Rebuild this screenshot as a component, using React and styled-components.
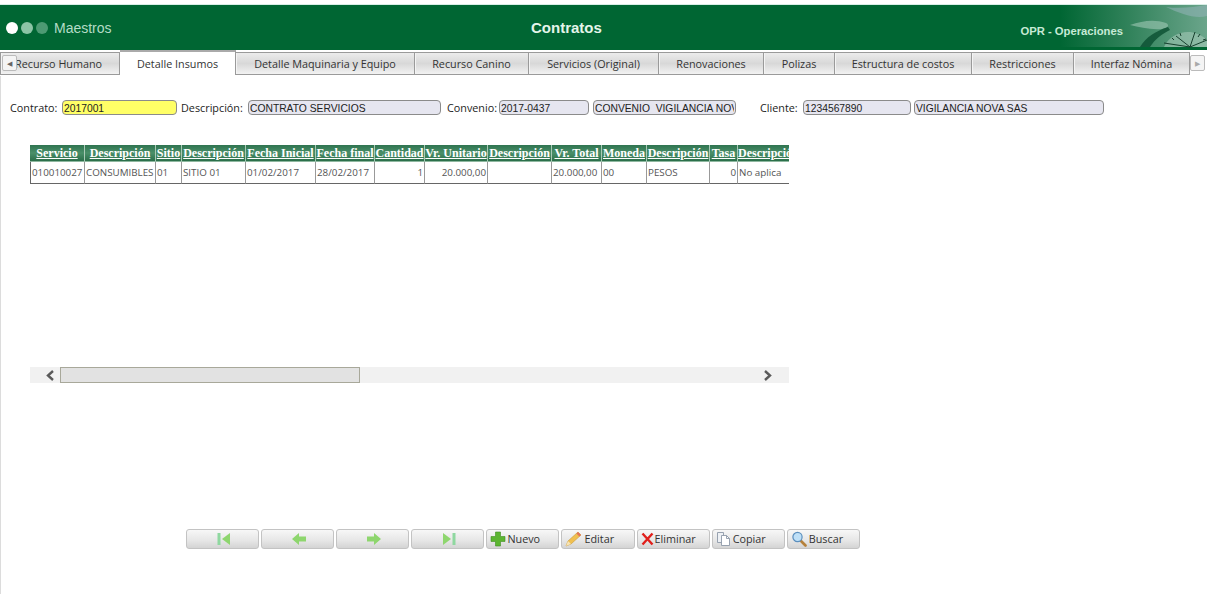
import React from 'react';
import styled, { createGlobalStyle } from 'styled-components';

const GlobalStyle = createGlobalStyle`
  html, body {
    margin: 0;
    padding: 0;
    background: #fff;
    overflow: hidden;
  }
`;

const Page = styled.div`
  width: 1207px;
  height: 594px;
  padding-top: 5px;
  box-sizing: border-box;
  display: flex;
  flex-direction: column;
  font-family: "Open Sans", "Liberation Sans", sans-serif;
`;

const Header = styled.header`
  position: relative;
  height: 45px;
  flex: none;
  background: #006633;
  box-shadow: 0 -1px 0 #d8eee6;
  display: grid;
  grid-template-columns: 531px auto 1fr;
  align-items: center;
`;

const HeaderLeft = styled.div`
  display: flex;
  align-items: center;
  padding-left: 6px;
  gap: 3px;
  font: 14px "Liberation Sans", Arial, sans-serif;
  color: #b3dcc6;
`;

const Dot = styled.span`
  width: 12px;
  height: 12px;
  border-radius: 50%;
  background: ${(p) => p.$color};
`;

const HeaderLabel = styled.span`
  margin-left: 3px;
`;

const HeaderTitle = styled.div`
  font: bold 15px "Liberation Sans", Arial, sans-serif;
  color: #e4f5ea;
`;

const HeaderRight = styled.div`
  position: relative;
  z-index: 1;
  text-align: right;
  padding-right: 84px;
  padding-top: 7px;
  font: bold 11.25px "Liberation Sans", Arial, sans-serif;
  color: #c6ead5;
`;

const HeaderArt = styled.svg`
  position: absolute;
  right: 0;
  top: 0;
`;

const TabStrip = styled.nav`
  display: flex;
  height: 25px;
  flex: none;
  margin-top: 1px;
  position: relative;
`;

const Tab = styled.div`
  box-sizing: border-box;
  width: ${(p) => p.$width}px;
  flex: none;
  height: ${(p) => (p.$active ? 25 : 23)}px;
  margin-top: ${(p) => (p.$active ? -1 : 1)}px;
  display: flex;
  align-items: center;
  justify-content: center;
  font-size: 10.8px;
  color: #333;
  overflow: hidden;
  white-space: nowrap;
  border-right: 1px solid #9a9a9a;
  border-bottom: ${(p) => (p.$active ? 'none' : '1px solid #9a9a9a')};
  border-top: ${(p) => (p.$active ? '2px solid #aaa' : '1px solid #9a9a9a')};
  background: ${(p) => (p.$active ? '#fff' : 'linear-gradient(#ececec, #d8d8d8 50%, #f2f2f2)')};
  box-shadow: ${(p) => (p.$active ? 'none' : 'inset 1px 0 0 #f4f4f4')};
`;

const FirstTab = styled(Tab)`
  justify-content: flex-start;
  padding-left: 14px;
  border-left: 1px solid #9a9a9a;
`;

const ScrollArrow = styled.div`
  box-sizing: border-box;
  width: 15px;
  height: 16px;
  position: absolute;
  top: 4px;
  left: ${(p) => p.$left}px;
  background: #f4f4f4;
  border: 1px solid #bbb;
  border-radius: 2px;
  display: flex;
  align-items: center;
  justify-content: center;
  color: ${(p) => p.$color};
  font-size: 7px;
  line-height: 1;
`;

const Content = styled.main`
  flex: 1;
  display: flex;
  flex-direction: column;
  box-shadow: inset 1px 0 0 #dcdcdc;
`;

const FormRow = styled.div`
  display: flex;
  align-items: center;
  height: 16px;
  margin-top: 23px;
  padding-left: 10px;
  flex: none;
`;

const Label = styled.label`
  font-size: 10.8px;
  color: #222;
  width: ${(p) => p.$width}px;
  margin-left: ${(p) => p.$gap || 0}px;
  flex: none;
  white-space: nowrap;
`;

const Field = styled.input`
  box-sizing: border-box;
  flex: none;
  width: ${(p) => p.$width}px;
  margin: 0 0 0 ${(p) => p.$gap || 0}px;
  height: 15px;
  padding: 2px 1px 0;
  border: 1px solid #8b8b8b;
  border-radius: 4px;
  background: ${(p) => (p.$key ? '#ffff66' : '#e6e6f0')};
  font: 10.3px "Liberation Sans", Arial, sans-serif;
  color: #222;
  outline: none;
`;

const GridWrap = styled.div`
  width: 759px;
  margin: 30px 0 0 30px;
  flex: none;
`;

const GridClip = styled.div`
  height: 222px;
  overflow: hidden;
`;

const Table = styled.table`
  border-collapse: separate;
  border-spacing: 0;
  table-layout: fixed;
  width: 760px;
`;

const Th = styled.th`
  height: 17px;
  padding: 0;
  box-sizing: border-box;
  background: linear-gradient(#2f7450, #4a8f69 50%, #2a6e49);
  border-right: 1px solid #a9c9b6;
  border-bottom: 1px solid #8fb8a0;
  color: #fff;
  font: bold 12px "Liberation Serif", "Times New Roman", serif;
  text-decoration: underline;
  text-align: center;
  white-space: nowrap;
  overflow: hidden;
`;

const Td = styled.td`
  height: 22px;
  padding: 0 1px;
  box-sizing: border-box;
  border-right: 1px solid #999;
  border-bottom: 1px solid #666;
  border-left: ${(p) => (p.$first ? '1px solid #666' : 'none')};
  color: #555;
  font-size: 9.8px;
  text-align: ${(p) => (p.$num ? 'right' : 'left')};
  white-space: nowrap;
  overflow: hidden;
`;

const ScrollBar = styled.div`
  height: 16px;
  background: #f1f1f1;
  display: flex;
  align-items: center;
`;

const ScrollBtnLeft = styled.div`
  width: 30px;
  flex: none;
  display: flex;
  justify-content: center;
  align-items: center;
  padding-left: 10px;
  box-sizing: border-box;
`;

const ScrollBtnRight = styled(ScrollBtnLeft)`
  padding-left: 0;
  padding-right: 12px;
`;

const ScrollThumb = styled.div`
  box-sizing: border-box;
  width: 300px;
  height: 16px;
  flex: none;
  background: #e2e2e2;
  border: 1px solid #a8a89a;
`;

const ScrollSpacer = styled.div`
  flex: 1;
`;

const Toolbar = styled.div`
  display: flex;
  gap: 2px;
  margin: 146px 0 0 186px;
  flex: none;
`;

const ToolButton = styled.button`
  box-sizing: border-box;
  width: 73.1px;
  height: 20px;
  padding: 0 0 1px 3px;
  display: flex;
  align-items: center;
  justify-content: ${(p) => (p.$nav ? 'center' : 'flex-start')};
  gap: 1px;
  background: linear-gradient(#f7f7f7, #e6e6e6 60%, #d4d4d4);
  border: 1px solid #c3c3c3;
  border-radius: 3px;
  font: 10.8px "Open Sans", "Liberation Sans", sans-serif;
  color: #333;
`;

const tabs = [
  ['Detalle Insumos', 116, true],
  ['Detalle Maquinaria y Equipo', 179],
  ['Recurso Canino', 114],
  ['Servicios (Original)', 130],
  ['Renovaciones', 105],
  ['Polizas', 71],
  ['Estructura de costos', 137],
  ['Restricciones', 102],
  ['Interfaz Nómina', 116],
];

const columns = [
  ['Servicio', 55, '010010027'],
  ['Descripción', 71, 'CONSUMIBLES'],
  ['Sitio', 26, '01'],
  ['Descripción', 64, 'SITIO 01'],
  ['Fecha Inicial', 70, '01/02/2017'],
  ['Fecha final', 59, '28/02/2017'],
  ['Cantidad', 50, '1', true],
  ['Vr. Unitario', 63, '20.000,00', true],
  ['Descripción', 64, ''],
  ['Vr. Total', 50, '20.000,00'],
  ['Moneda', 45, '00'],
  ['Descripción', 63, 'PESOS'],
  ['Tasa', 28, '0', true],
  ['Descripción', 52, 'No aplica'],
];

const NavIcon = ({ dir }) => (
  <svg width="16" height="14" viewBox="0 0 16 14" fill="#8ed66e">
    {dir === 'first' && (
      <>
        <rect x="1.5" y="1" width="3" height="12" fill="#8fd8a0" />
        <path d="M14 1v12L6 7z" />
      </>
    )}
    {dir === 'prev' && <path d="M1 7l7-6v3.5h7v5H8V13z" />}
    {dir === 'next' && <path d="M15 7L8 1v3.5H1v5h7V13z" />}
    {dir === 'last' && (
      <>
        <rect x="11.5" y="1" width="3" height="12" fill="#8fd8a0" />
        <path d="M2 1v12l8-6z" />
      </>
    )}
  </svg>
);

const PlusIcon = () => (
  <svg width="16" height="16" viewBox="0 0 16 16">
    <path d="M5.5 1h5v4.5H15v5h-4.5V15h-5v-4.5H1v-5h4.5z" fill="#5cb531" stroke="#3f8f22" strokeWidth=".6" />
  </svg>
);

const PencilIcon = () => (
  <svg width="18" height="16" viewBox="0 0 18 16">
    <path d="M1 15l2-5L13 1l3 3-10 9z" fill="#f0c050" stroke="#c79a3a" strokeWidth=".6" />
    <path d="M13 1l3 3-1.6 1.6-3-3z" fill="#e2735a" />
    <path d="M1 15l2-5 3 3z" fill="#f7e3b5" />
  </svg>
);

const CrossIcon = () => (
  <svg width="13" height="14" viewBox="0 0 13 14">
    <path d="M1.5 1.5l10 11M11.5 1.5l-10 11" stroke="#e0201c" strokeWidth="2.4" />
  </svg>
);

const CopyIcon = () => (
  <svg width="16" height="16" viewBox="0 0 16 16" fill="#fff" stroke="#8d98a8" strokeWidth=".9">
    <path d="M1.5 1.5h6v10h-6z" fill="#eef1f5" />
    <path d="M5.5 4.5h5l3 3v7h-8z" />
    <path d="M10.5 4.5v3h3" fill="none" />
  </svg>
);

const SearchIcon = () => (
  <svg width="17" height="16" viewBox="0 0 17 16">
    <path d="M9.5 9.5l5 5" stroke="#b5803a" strokeWidth="2.6" strokeLinecap="round" />
    <circle cx="6.5" cy="6" r="4.6" fill="#bfe0f7" stroke="#5b8fbe" strokeWidth="1.2" />
  </svg>
);

const Chevron = ({ left }) => (
  <svg width="10" height="11" viewBox="0 0 10 11">
    <path d={left ? 'M8 1L3 5.5 8 10' : 'M2 1l5 4.5L2 10'} fill="none" stroke="#5a5a5a" strokeWidth="2.4" />
  </svg>
);

const App = () => (
  <Page>
    <GlobalStyle />
    <Header>
      <HeaderLeft>
        <Dot $color="#ffffff" />
        <Dot $color="#8cc4a6" />
        <Dot $color="#4d9a73" />
        <HeaderLabel>Maestros</HeaderLabel>
      </HeaderLeft>
      <HeaderTitle>Contratos</HeaderTitle>
      <HeaderRight>OPR - Operaciones</HeaderRight>
      <HeaderArt width="147" height="45" viewBox="0 0 147 45">
        <defs>
          <linearGradient id="fade" x1="0" x2="1" y1="0" y2="0">
            <stop offset="0" stopColor="#006633" />
            <stop offset="0.45" stopColor="#2f8159" />
            <stop offset="1" stopColor="#6ba58b" />
          </linearGradient>
        </defs>
        <rect width="147" height="42" fill="url(#fade)" />
        <path d="M106 2c14 2 28 0 41-2v11c-12 3-26-2-41-9z" fill="#8fb3b4" opacity=".6" />
        <path d="M70 20c12-4 24-6 36-2 4 2 2 5-4 6-12 1-22-2-32-4z" fill="#a8cdbc" opacity=".55" />
        <path d="M108 22c-12 4-22 10-28 20h10c5-8 12-13 20-17z" fill="#0a4f31" opacity=".8" />
        <path d="M104 42c4-10 16-16 26-15 8 1 14 5 17 8v7z" fill="#bcd6ca" opacity=".45" />
        <path d="M130 42l-14-11M130 42l5-15M130 42l17-7M130 42l-26-4" stroke="#17402e" strokeWidth="1" fill="none" />
        <path d="M112 33l2 2M120 28l1 3M140 29l-2 3M146 34l-3 1" stroke="#17402e" strokeWidth="1" />
      </HeaderArt>
    </Header>

    <TabStrip>
      <FirstTab $width={120}>Recurso Humano</FirstTab>
      {tabs.map(([name, width, active]) => (
        <Tab key={name} $width={width} $active={active}>
          {name}
        </Tab>
      ))}
      <ScrollArrow $left={2} $color="#666">◀</ScrollArrow>
      <ScrollArrow $left={1190} $color="#aaa">▶</ScrollArrow>
    </TabStrip>

    <Content>
      <FormRow>
        <Label $width={52}>Contrato:</Label>
        <Field $width={115} $key readOnly value="2017001" />
        <Label $width={67} $gap={4}>Descripción:</Label>
        <Field $width={193} readOnly value="CONTRATO SERVICIOS" />
        <Label $width={52} $gap={6}>Convenio:</Label>
        <Field $width={90} readOnly value="2017-0437" />
        <Field $width={143} $gap={4} readOnly value="CONVENIO  VIGILANCIA NOVA" />
        <Label $width={43} $gap={24}>Cliente:</Label>
        <Field $width={108} readOnly value="1234567890" />
        <Field $width={190} $gap={3} readOnly value="VIGILANCIA NOVA SAS" />
      </FormRow>

      <GridWrap>
        <GridClip>
          <Table>
            <colgroup>
              {columns.map(([name, width], i) => (
                <col key={i} width={width} />
              ))}
            </colgroup>
            <thead>
              <tr>
                {columns.map(([name], i) => (
                  <Th key={i}>{name}</Th>
                ))}
              </tr>
            </thead>
            <tbody>
              <tr>
                {columns.map(([name, , value, num], i) => (
                  <Td key={i} $first={i === 0} $num={num}>
                    {value}
                  </Td>
                ))}
              </tr>
            </tbody>
          </Table>
        </GridClip>
        <ScrollBar>
          <ScrollBtnLeft>
            <Chevron left />
          </ScrollBtnLeft>
          <ScrollThumb />
          <ScrollSpacer />
          <ScrollBtnRight>
            <Chevron />
          </ScrollBtnRight>
        </ScrollBar>
      </GridWrap>

      <Toolbar>
        <ToolButton $nav><NavIcon dir="first" /></ToolButton>
        <ToolButton $nav><NavIcon dir="prev" /></ToolButton>
        <ToolButton $nav><NavIcon dir="next" /></ToolButton>
        <ToolButton $nav><NavIcon dir="last" /></ToolButton>
        <ToolButton><PlusIcon />Nuevo</ToolButton>
        <ToolButton><PencilIcon />Editar</ToolButton>
        <ToolButton><CrossIcon />Eliminar</ToolButton>
        <ToolButton><CopyIcon />Copiar</ToolButton>
        <ToolButton><SearchIcon />Buscar</ToolButton>
      </Toolbar>
    </Content>
  </Page>
);

export default App;
